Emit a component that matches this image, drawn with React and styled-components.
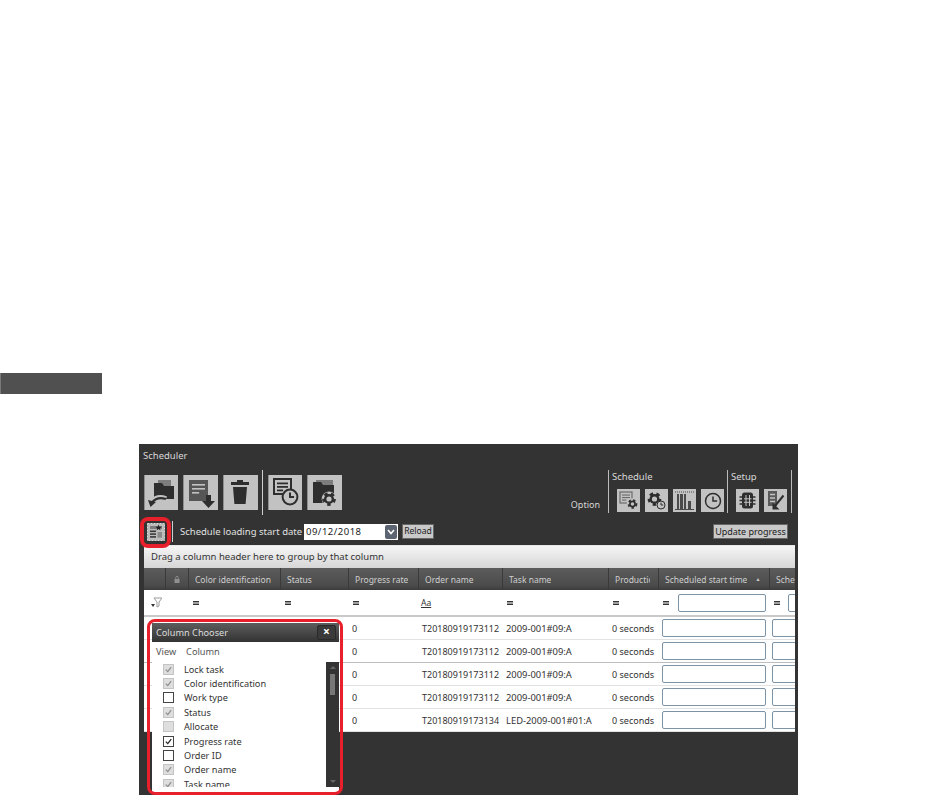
import styled, { createGlobalStyle } from "styled-components";

const COLUMNS = "22px 23px 92px 68px 70px 84px 106px 50px 111px 100px";

const GlobalStyle = createGlobalStyle`
    html, body {
        margin: 0;
        padding: 0;
        background: #fff;
    }
    body {
        font-family: "Noto Sans", "Liberation Sans", sans-serif;
        font-size: 9.5px;
    }
`;

const Gear = ({ cx, cy, r = 4, color = "#2e2e2e", hole = "#c2c2c2" }) => (
    <g>
        <circle cx={cx} cy={cy} r={r + 2.4} fill={hole} />
        <circle cx={cx} cy={cy} r={r + 0.5} fill="none" stroke={color} strokeWidth={r * 0.55} strokeDasharray={`${r * 0.68} ${r * 0.68}`} />
        <circle cx={cx} cy={cy} r={r} fill={color} />
        <circle cx={cx} cy={cy} r={r * 0.52} fill={hole} />
    </g>
);

const Clock = ({ cx, cy, r, fill = "#c2c2c2", width = 2 }) => (
    <g>
        <circle cx={cx} cy={cy} r={r} fill={fill} stroke="#2e2e2e" strokeWidth={width} />
        <path d={`M${cx} ${cy - r * 0.6}V${cy}H${cx + r * 0.55}`} fill="none" stroke="#2e2e2e" strokeWidth={width} />
    </g>
);

const Lines = ({ x, y, w, gap = 3.5, n = 3, color = "#c2c2c2", h = 1.6 }) => (
    <g fill={color}>
        {Array.from({ length: n }, (_, i) => (
            <rect key={i} x={x} y={y + i * gap} width={i === n - 1 ? w * 0.55 : w} height={h} />
        ))}
    </g>
);

const OpenIcon = () => (
    <svg viewBox="0 0 34 34" width="34" height="34">
        <path d="M14 5h13v6H14z" fill="#7d7d7d" />
        <path d="M10 8h8l2 3h10v13H10z" fill="#2e2e2e" />
        <path d="M22 24c-6-2.4-11-.6-14 3" fill="none" stroke="#c2c2c2" strokeWidth="5.5" />
        <path d="M22 24c-6-2-11-.4-14 3.4" fill="none" stroke="#2e2e2e" strokeWidth="2.2" />
        <path d="M4 25l8 2-5.5 5z" fill="#2e2e2e" />
    </svg>
);

const SaveIcon = () => (
    <svg viewBox="0 0 34 34" width="34" height="34">
        <rect x="6" y="5" width="19" height="21" fill="#565656" />
        <Lines x={9} y={9} w={13} gap={4} />
        <path d="M23 20h5v6h4l-6.5 7-6.5-7h4z" fill="#2e2e2e" />
    </svg>
);

const TrashIcon = () => (
    <svg viewBox="0 0 34 34" width="34" height="34">
        <path d="M14 7V5h6v2h6v3H8V7z" fill="#2e2e2e" />
        <path d="M10 12h14l-1.4 17H11.4z" fill="#2e2e2e" />
    </svg>
);

const ScheduleClockIcon = () => (
    <svg viewBox="0 0 34 34" width="34" height="34">
        <rect x="6" y="4" width="17" height="15" fill="#c2c2c2" stroke="#2e2e2e" strokeWidth="2" />
        <Lines x={9} y={7.5} w={11} color="#2e2e2e" h={1.8} />
        <Clock cx={22} cy={22} r={7.4} />
    </svg>
);

const FolderGearIcon = () => (
    <svg viewBox="0 0 34 34" width="34" height="34">
        <path d="M9 5h17v6H9z" fill="#7d7d7d" />
        <path d="M6 7h8l2 3h11v12H6z" fill="#2e2e2e" />
        <path d="M6 20h10v8H6z" fill="#2e2e2e" />
        <Gear cx={22} cy={24} r={5} />
    </svg>
);

const DocGearIcon = () => (
    <svg viewBox="0 0 23 23" width="23" height="23">
        <rect x="3" y="3" width="12" height="11" fill="#c2c2c2" stroke="#6a6a6a" strokeWidth="1.2" />
        <Lines x={5} y={5.5} w={8} gap={2.5} color="#6a6a6a" h={1.1} />
        <Gear cx={15.5} cy={15} r={3.4} />
    </svg>
);

const GearClockIcon = () => (
    <svg viewBox="0 0 23 23" width="23" height="23">
        <Gear cx={9.5} cy={10} r={5} />
        <Clock cx={16} cy={16} r={4} width={1} />
    </svg>
);

const BarsIcon = () => (
    <svg viewBox="0 0 23 23" width="23" height="23">
        <path d="M2 3h19" stroke="#4a4a4a" strokeWidth="1.2" strokeDasharray="1 1" />
        <rect x="4" y="5" width="2" height="15" fill="#4a4a4a" />
        <rect x="7" y="5" width="3" height="15" fill="#4a4a4a" />
        <rect x="11" y="5" width="2" height="15" fill="#4a4a4a" />
        <rect x="15" y="12" width="3" height="8" fill="#4a4a4a" />
        <path d="M2 20.5h19" stroke="#4a4a4a" />
    </svg>
);

const ClockIcon = () => (
    <svg viewBox="0 0 23 23" width="23" height="23">
        <Clock cx={12} cy={12} r={7.5} width={1.5} />
    </svg>
);

const ChipIcon = () => (
    <svg viewBox="0 0 23 23" width="23" height="23">
        <rect x="6" y="3.5" width="11" height="16" rx="2.5" fill="#2e2e2e" />
        <path d="M3.5 8h16M3.5 11.5h16M3.5 15h16" stroke="#2e2e2e" strokeWidth="1.4" />
        <path d="M10 6v11M13.5 6v11M8 9.8h7.5M8 13.3h7.5" stroke="#c2c2c2" strokeWidth="1" />
    </svg>
);

const ListArrowIcon = () => (
    <svg viewBox="0 0 23 23" width="23" height="23">
        <rect x="4" y="2" width="9" height="15" fill="#5a5a5a" />
        <path d="M6 5.5h5M6 9h5M6 12.5h5" stroke="#c2c2c2" strokeWidth="1.3" />
        <path d="M19.5 6.5L11 17" stroke="#2e2e2e" strokeWidth="2" />
        <path d="M8.5 13.5v7h7z" fill="#2e2e2e" />
    </svg>
);

const ColumnChooserIcon = () => (
    <svg viewBox="0 0 18 18" width="18" height="18">
        <rect x="0.5" y="0.5" width="17" height="17" fill="#bcbcbc" stroke="#dcdcdc" strokeDasharray="2 1" />
        <rect x="3" y="3" width="12" height="3" fill="#7c7c7c" />
        <rect x="3" y="7.5" width="6" height="1.6" fill="#3a3a3a" />
        <rect x="3" y="10.3" width="6" height="1.6" fill="#3a3a3a" />
        <rect x="3" y="13.1" width="6" height="1.6" fill="#3a3a3a" />
        <rect x="10.5" y="9" width="4.5" height="5.7" fill="#8a8a8a" />
        <path d="M11.5 1.5l.9 2.2 2.3.1-1.8 1.4.7 2.2-2.1-1.3-2 1.3.7-2.2-1.8-1.4 2.3-.1z" fill="#222" />
    </svg>
);

const FilterIcon = () => (
    <svg viewBox="0 0 12 11" width="12" height="11">
        <path d="M4 1h8L9 5v4L7 10V5z" fill="none" stroke="#9a9a9a" />
        <path d="M1 7h4L3 10z" fill="#333" />
    </svg>
);

const LockIcon = () => (
    <svg viewBox="0 0 6 7" width="6" height="7">
        <rect x="0.5" y="3" width="5" height="4" fill="#8f8f8f" />
        <path d="M1.7 3V1.7a1.3 1.3 0 0 1 2.6 0V3" fill="none" stroke="#8f8f8f" strokeWidth="0.9" />
    </svg>
);

const Check = ({ color }) => (
    <svg viewBox="0 0 11 11" width="11" height="11">
        <path d="M2.2 5.6l2.4 2.5 4.2-5.4" fill="none" stroke={color} strokeWidth="1.5" />
    </svg>
);

const HEADERS = ["", "lock", "Color identification", "Status", "Progress rate", "Order name", "Task name", "Production", "Scheduled start time", "Scheduled"];
const ROWS = [
    ["T20180919173112", "2009-001#09:A"],
    ["T20180919173112", "2009-001#09:A"],
    ["T20180919173112", "2009-001#09:A"],
    ["T20180919173112", "2009-001#09:A"],
    ["T20180919173134", "LED-2009-001#01:A"],
];
const CHOOSER = [
    ["Lock task", "locked"],
    ["Color identification", "locked"],
    ["Work type", "off"],
    ["Status", "locked"],
    ["Allocate", "disabled"],
    ["Progress rate", "on"],
    ["Order ID", "off"],
    ["Order name", "locked"],
    ["Task name", "locked"],
];

const App = () => (
    <Page>
        <GlobalStyle />
        <SectionBar />
        <Panel>
            <PanelTitle>Scheduler</PanelTitle>
            <Toolbar>
                <TileGroup>
                    <Tile><OpenIcon /></Tile>
                    <Tile $wide><SaveIcon /></Tile>
                    <Tile $wide><TrashIcon /></Tile>
                    <ToolDivider />
                    <Tile><ScheduleClockIcon /></Tile>
                    <Tile $wide><FolderGearIcon /></Tile>
                </TileGroup>
                <OptionArea>
                    <OptionLabel>Option</OptionLabel>
                    <OptionGroup $width="119px">
                        <GroupTitle>Schedule</GroupTitle>
                        <SmallTiles>
                            <SmallTile><DocGearIcon /></SmallTile>
                            <SmallTile><GearClockIcon /></SmallTile>
                            <SmallTile><BarsIcon /></SmallTile>
                            <SmallTile><ClockIcon /></SmallTile>
                        </SmallTiles>
                    </OptionGroup>
                    <OptionGroup $width="65px" $last>
                        <GroupTitle>Setup</GroupTitle>
                        <SmallTiles>
                            <SmallTile><ChipIcon /></SmallTile>
                            <SmallTile><ListArrowIcon /></SmallTile>
                        </SmallTiles>
                    </OptionGroup>
                </OptionArea>
            </Toolbar>
            <DateBar>
                <ChooserButton>
                    <ColumnChooserIcon />
                    <Highlight $inset="-6px -6px -7px -7px" $weight="4px" />
                </ChooserButton>
                <BarDivider />
                <DateLabel>Schedule loading start date</DateLabel>
                <DateSelect>
                    09/12/2018
                    <DateArrow>
                        <svg viewBox="0 0 8 6" width="8" height="6">
                            <path d="M1 1l3 3.5L7 1" fill="none" stroke="#fff" strokeWidth="1.6" />
                        </svg>
                    </DateArrow>
                </DateSelect>
                <GrayButton>Reload</GrayButton>
                <UpdateButton>Update progress</UpdateButton>
            </DateBar>
            <Grid>
                <GroupBar>Drag a column header here to group by that column</GroupBar>
                <HeaderRow>
                    {HEADERS.map((title, i) => (
                        <HeaderCell key={i} $centered={i === 1}>
                            <HeaderText>{title === "lock" ? <LockIcon /> : title}</HeaderText>
                            {i === 8 && <SortMark>▲</SortMark>}
                        </HeaderCell>
                    ))}
                </HeaderRow>
                <FilterRow>
                    <FilterCell $pad="6px"><FilterIcon /></FilterCell>
                    <FilterCell />
                    <FilterCell><Equals /></FilterCell>
                    <FilterCell><Equals /></FilterCell>
                    <FilterCell><Equals /></FilterCell>
                    <FilterCell><FilterAa>Aa</FilterAa></FilterCell>
                    <FilterCell><Equals /></FilterCell>
                    <FilterCell><Equals /></FilterCell>
                    <FilterCell><Equals /><FilterInput $gap="9px" /></FilterCell>
                    <FilterCell><Equals /><FilterInput $gap="8px" /></FilterCell>
                </FilterRow>
                {ROWS.map(([order, task], i) => (
                    <DataRow key={i} $strong={i === 1}>
                        <DataCell />
                        <DataCell />
                        <DataCell />
                        <DataCell />
                        <DataCell>0</DataCell>
                        <DataCell>{order}</DataCell>
                        <DataCell $size="9.4px">{task}</DataCell>
                        <DataCell>0 seconds</DataCell>
                        <DataCell $pad="3px"><RowInput /></DataCell>
                        <DataCell $pad="2px"><RowInput /></DataCell>
                    </DataRow>
                ))}
            </Grid>
            <Chooser>
                <Highlight $inset="-4px -4px -3px -5px" />
                <ChooserHead>
                    Column Chooser
                    <CloseButton>×</CloseButton>
                </ChooserHead>
                <ChooserColumns>
                    <span>View</span>
                    <span>Column</span>
                </ChooserColumns>
                <ChooserBody>
                    <ChooserList>
                        {CHOOSER.map(([label, state]) => (
                            <ChooserItem key={label}>
                                <CheckBox $state={state}>
                                    {state === "locked" && <Check color="#8d8d8d" />}
                                    {state === "on" && <Check color="#222" />}
                                </CheckBox>
                                {label}
                            </ChooserItem>
                        ))}
                    </ChooserList>
                    <ScrollTrack>
                        <ScrollArrow $up />
                        <ScrollThumb />
                        <ScrollArrow />
                    </ScrollTrack>
                </ChooserBody>
            </Chooser>
        </Panel>
    </Page>
);

const Page = styled.div`
    height: 808px;
    padding-top: 373px;
    box-sizing: border-box;
    overflow: hidden;
`;

const SectionBar = styled.div`
    width: 102px;
    height: 21px;
    box-sizing: border-box;
    background: #505050;
    border-left: 1px solid #7a7a7a;
`;

const Panel = styled.div`
    position: relative;
    width: 659px;
    height: 351px;
    margin: 50px 0 0 139px;
    padding-left: 5px;
    box-sizing: border-box;
    background: #333;
    color: #ddd;
    overflow: hidden;
`;

const PanelTitle = styled.div`
    height: 26px;
    margin-left: -1px;
    padding-top: 5px;
    box-sizing: border-box;
    color: #d8d8d8;
`;

const Toolbar = styled.div`
    display: flex;
    justify-content: space-between;
    height: 48px;
`;

const TileGroup = styled.div`
    display: flex;
    align-items: flex-start;
    gap: 5px;
    padding-top: 5px;
`;

const Tile = styled.div`
    width: ${(p) => (p.$wide ? "35px" : "34px")};
    height: 35px;
    background: #c2c2c2;
    box-shadow: inset 1px 0 0 #8f8f8f;
`;

const ToolDivider = styled.div`
    width: 1px;
    height: 45px;
    margin: -5px 0 0 -1px;
    background: #cfcfcf;
`;

const OptionArea = styled.div`
    display: flex;
    align-items: flex-start;
    margin-right: 6px;
`;

const OptionLabel = styled.div`
    margin: 28px 8px 0 0;
    font-size: 9px;
    color: #d8d8d8;
`;

const OptionGroup = styled.div`
    width: ${(p) => p.$width};
    height: 43px;
    box-sizing: border-box;
    padding-left: 8px;
    border-left: 1px solid #bbb;
    border-right: ${(p) => (p.$last ? "1px solid #bbb" : "none")};
`;

const GroupTitle = styled.div`
    height: 19px;
    margin-left: -5px;
    color: #d8d8d8;
    line-height: 14px;
`;

const SmallTiles = styled.div`
    display: flex;
    gap: 5px;
`;

const SmallTile = styled.div`
    width: 23px;
    height: 23px;
    background: #c2c2c2;
`;

const DateBar = styled.div`
    position: relative;
    display: flex;
    align-items: center;
    height: 27px;
`;

const ChooserButton = styled.div`
    position: relative;
    display: flex;
    width: 18px;
    height: 18px;
    margin-left: 3px;
`;

const Highlight = styled.div`
    position: absolute;
    inset: ${(p) => p.$inset};
    border: ${(p) => p.$weight || "3px"} solid #e8202c;
    border-radius: 8px;
    pointer-events: none;
    z-index: 2;
`;

const BarDivider = styled.div`
    width: 1px;
    height: 21px;
    margin: 0 7px;
    background: #cfcfcf;
`;

const DateLabel = styled.div`
    width: 124px;
    color: #e0e0e0;
`;

const DateSelect = styled.div`
    display: flex;
    align-items: center;
    justify-content: space-between;
    width: 94px;
    height: 16px;
    padding-left: 2px;
    box-sizing: border-box;
    background: #fff;
    color: #222;
    letter-spacing: 0.5px;
`;

const DateArrow = styled.div`
    display: flex;
    align-items: center;
    justify-content: center;
    width: 12px;
    height: 14px;
    margin-right: 1px;
    border-radius: 2px;
    background: #5b6470;
`;

const GrayButton = styled.div`
    height: 15px;
    width: 32px;
    margin-left: 4px;
    box-sizing: border-box;
    background: #c9c9c9;
    border: 1px solid #666;
    color: #222;
    font-size: 8.6px;
    line-height: 13px;
    text-align: center;
    white-space: nowrap;
`;

const UpdateButton = styled(GrayButton)`
    width: 75px;
    margin-left: auto;
    margin-right: 10px;
    font-size: 9px;
`;

const Grid = styled.div`
    width: 651px;
    height: 187px;
    overflow: hidden;
    background: #fff;
    color: #333;
    font-size: 9px;
`;

const GroupBar = styled.div`
    height: 23px;
    padding-left: 7px;
    box-sizing: border-box;
    background: linear-gradient(#f6f6f6, #d6d6d6);
    border-top: 1px solid #e8e8e8;
    color: #333;
    font-size: 9.5px;
    line-height: 22px;
`;

const HeaderRow = styled.div`
    display: grid;
    grid-template-columns: ${COLUMNS};
    height: 22px;
    background: linear-gradient(#5c5c5c, #4b4b4b 80%, #3c3c3c);
`;

const HeaderCell = styled.div`
    display: flex;
    align-items: center;
    justify-content: ${(p) => (p.$centered ? "center" : "flex-start")};
    padding: ${(p) => (p.$centered ? 0 : "0 8px 0 6px")};
    border-right: 1px solid #3a3a3a;
    color: #cfcfcf;
    font-size: 8.5px;
    white-space: nowrap;
    overflow: hidden;
`;

const HeaderText = styled.span`
    display: flex;
    overflow: hidden;
`;

const SortMark = styled.span`
    flex: none;
    margin-left: 8px;
    font-size: 5px;
`;

const FilterRow = styled.div`
    display: grid;
    grid-template-columns: ${COLUMNS};
    height: 27px;
    border-bottom: 2px solid #c9c9c9;
    box-sizing: border-box;
`;

const FilterCell = styled.div`
    display: flex;
    align-items: center;
    padding-left: ${(p) => p.$pad || "4px"};
    overflow: hidden;
`;

const Equals = styled.span`
    flex: none;
    width: 6px;
    height: 4px;
    border-top: 1px solid #333;
    border-bottom: 1px solid #333;
    box-sizing: border-box;
    background: #a0a0a0;
`;

const FilterAa = styled.span`
    margin-left: -2px;
    font-size: 8.5px;
    text-decoration: underline;
`;

const FilterInput = styled.div`
    flex: none;
    width: 88px;
    height: 18px;
    margin-left: ${(p) => p.$gap};
    box-sizing: border-box;
    border: 1px solid #7d93a6;
    border-radius: 2px;
    background: #fff;
`;

const DataRow = styled.div`
    display: grid;
    grid-template-columns: ${COLUMNS};
    height: 23px;
    box-sizing: border-box;
    border-bottom: 1px solid ${(p) => (p.$strong ? "#bdbdbd" : "#e2e2e2")};
`;

const DataCell = styled.div`
    display: flex;
    align-items: center;
    padding-left: ${(p) => p.$pad || "3px"};
    font-size: ${(p) => p.$size || "9px"};
    white-space: nowrap;
    overflow: hidden;
`;

const RowInput = styled.div`
    flex: none;
    width: 104px;
    height: 18px;
    box-sizing: border-box;
    border: 1px solid #7d93a6;
    border-radius: 2px;
    background: #fff;
`;

const Chooser = styled.div`
    position: absolute;
    left: 13px;
    top: 179px;
    width: 187px;
    height: 169px;
    background: #fff;
    color: #333;
    font-size: 9.2px;
`;

const ChooserHead = styled.div`
    display: flex;
    align-items: center;
    justify-content: space-between;
    height: 19px;
    padding: 0 3px 0 4px;
    box-sizing: border-box;
    background: linear-gradient(#5d5d5d, #333);
    color: #dcdcdc;
`;

const CloseButton = styled.div`
    width: 19px;
    height: 15px;
    border: 1px solid #2a2a2a;
    border-radius: 2px;
    box-sizing: border-box;
    background: #3a3a3a;
    color: #fff;
    font-size: 12px;
    font-weight: 700;
    line-height: 12px;
    text-align: center;
`;

const ChooserColumns = styled.div`
    display: flex;
    gap: 10px;
    height: 20px;
    padding: 3px 0 0 4px;
    box-sizing: border-box;
    color: #555;
`;

const ChooserBody = styled.div`
    display: flex;
    height: 125px;
`;

const ChooserList = styled.div`
    flex: 1;
    padding-left: 11px;
    overflow: hidden;
`;

const ChooserItem = styled.div`
    display: flex;
    align-items: center;
    gap: 10px;
    height: 14.4px;
`;

const CheckBox = styled.div`
    flex: none;
    display: flex;
    align-items: center;
    justify-content: center;
    width: 11px;
    height: 11px;
    box-sizing: border-box;
    border: 1px solid ${(p) => (p.$state === "locked" || p.$state === "disabled" ? "#c4c4c4" : "#444")};
    background: ${(p) => (p.$state === "locked" || p.$state === "disabled" ? "#dedede" : "#fff")};
`;

const ScrollTrack = styled.div`
    display: flex;
    flex-direction: column;
    align-items: center;
    flex: none;
    width: 13px;
    background: #333;
`;

const ScrollThumb = styled.div`
    width: 5px;
    height: 21px;
    margin: 5px 0 auto;
    background: #777;
`;

const ScrollArrow = styled.div`
    width: 0;
    height: 0;
    margin: ${(p) => (p.$up ? "4px 0 0" : "0 0 4px")};
    border-left: 3px solid transparent;
    border-right: 3px solid transparent;
    border-top: ${(p) => (p.$up ? "none" : "3px solid #666")};
    border-bottom: ${(p) => (p.$up ? "3px solid #666" : "none")};
`;

export default App;
